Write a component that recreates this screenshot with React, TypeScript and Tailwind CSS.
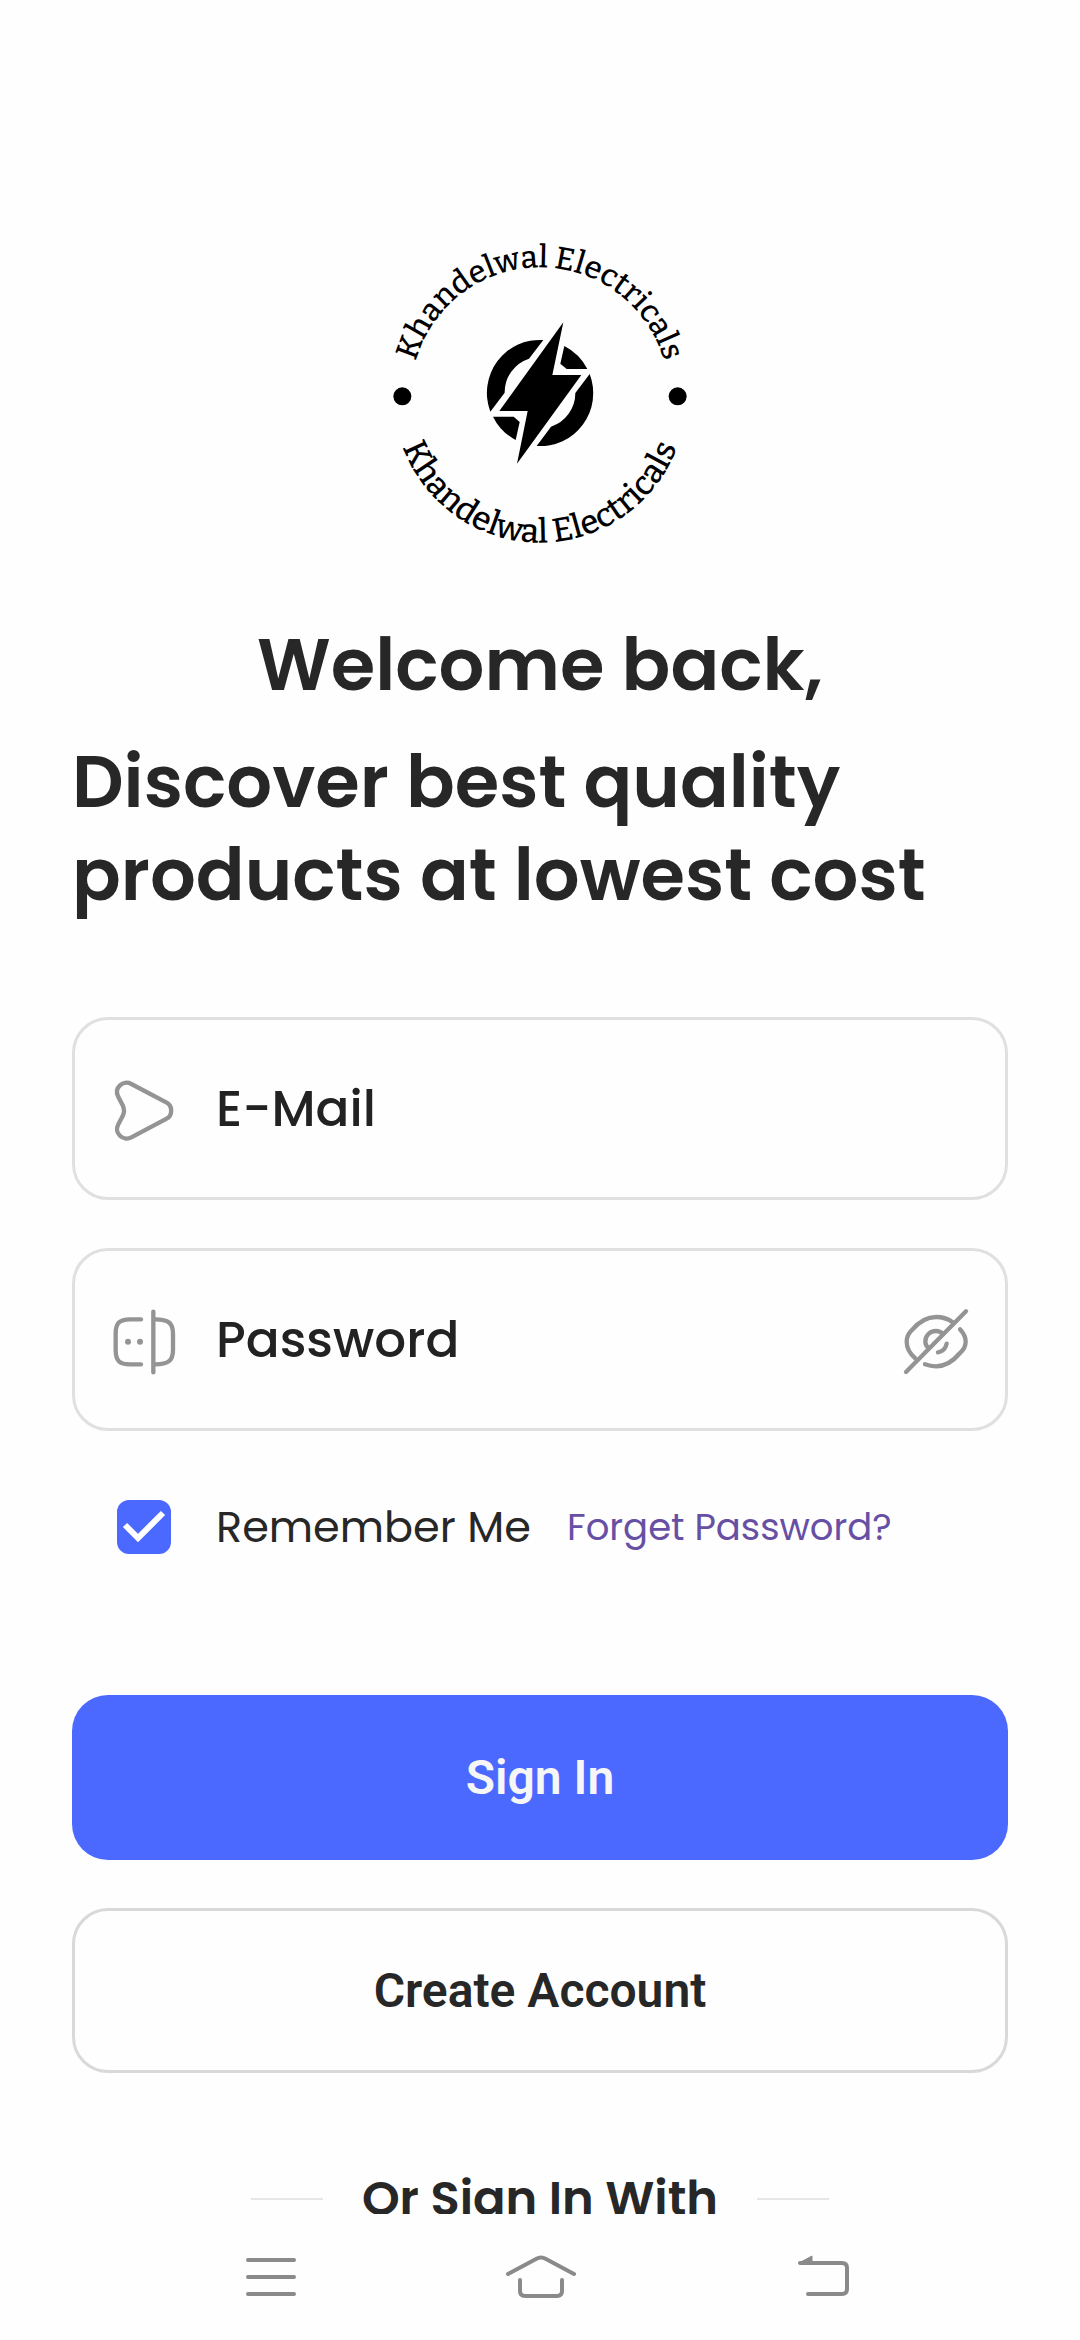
import { useState, type ReactNode } from "react";

const display = "font-['Poppins','Inter',sans-serif] text-[#272727]";

function Logo() {
  return (
    <svg
      viewBox="0 0 1020 1020"
      role="img"
      aria-label="Khandelwal Electricals"
      className="size-[340px] font-['Bitter','DejaVu_Serif_Condensed','DejaVu_Serif',serif] font-medium"
    >
      <defs>
        <path id="arc-top" d="M123 529 A387 387 0 0 1 897 529" />
        <path id="arc-bottom" d="M71 529 A439 439 0 0 0 949 529" />
      </defs>
      <text fontSize="94" textAnchor="middle">
        <textPath href="#arc-top" startOffset="50%">Khandelwal Electricals</textPath>
      </text>
      <text fontSize="100" textAnchor="middle">
        <textPath href="#arc-bottom" startOffset="50%">Khandelwal Electricals</textPath>
      </text>
      <circle cx="97" cy="529" r="27" />
      <circle cx="923" cy="529" r="27" />
      <path d="M580 307 L547 465 H634 L441 731 L473 573 H388 Z" />
      <path d="M520 360 A159 159 0 0 0 361 575 L404 518 A106 106 0 0 1 477 416 Z" />
      <path d="M583 378 A159 159 0 0 1 652 447 H590 L571 431 Z" />
      <path d="M659 462 A159 159 0 0 1 500 678 L543 620 A106 106 0 0 0 616 519 Z" />
      <path d="M369 590 A159 159 0 0 0 437 660 L449 606 L431 590 Z" />
    </svg>
  );
}

function LineIcon({ viewBox, children }: { viewBox: string; children: ReactNode }) {
  return (
    <svg
      viewBox={viewBox}
      aria-hidden="true"
      className="size-[72px] shrink-0 fill-none stroke-[#949494] stroke-[13] [stroke-linecap:round] [stroke-linejoin:round]"
    >
      {children}
    </svg>
  );
}

function Field({
  icon,
  label,
  type,
  action,
}: {
  icon: ReactNode;
  label: string;
  type: string;
  action?: ReactNode;
}) {
  return (
    <div className="flex h-[183px] items-center gap-9 rounded-[36px] border-3 border-[#e0e0e0] px-[33px]">
      {icon}
      <input
        type={type}
        aria-label={label}
        placeholder={label}
        className={`${display} h-full min-w-0 flex-1 bg-transparent text-[50px] font-medium outline-none placeholder:text-[#222222] placeholder:opacity-100`}
      />
      {action}
    </div>
  );
}

export default function App() {
  const [visible, setVisible] = useState(false);

  return (
    <div className="flex h-screen flex-col bg-[#fefefe]">
      <main className="min-h-0 flex-1 overflow-hidden px-18 pt-[220px]">
        <div className="flex justify-center">
          <Logo />
        </div>

        <h1 className={`${display} mt-[58px] text-center text-[72px] leading-[93px] font-semibold`}>
          Welcome back,
        </h1>
        <p className={`${display} mt-6 text-[72px] leading-[93px] font-semibold`}>
          Discover best quality products at lowest cost
        </p>

        <form className="mt-24 flex flex-col" onSubmit={(e) => e.preventDefault()}>
          <div className="flex flex-col gap-12">
            <Field
              label="E-Mail"
              type="email"
              icon={
                <LineIcon viewBox="144 218 216 216">
                  <path d="M214 251 L320 307 C338 317 338 345 320 355 L214 411 C190 424 160 398 175 372 L188 347 Q196 331 188 315 L175 290 C160 262 190 238 214 251 Z" />
                </LineIcon>
              }
            />
            <Field
              label="Password"
              type={visible ? "text" : "password"}
              icon={
                <LineIcon viewBox="144 911 216 216">
                  <path d="M243 957 H210 C178 957 167 968 167 1000 V1049 C167 1081 178 1092 210 1092 H243" />
                  <path d="M280 934 V1116" />
                  <path d="M286 957 C325 957 339 968 339 1000 V1049 C339 1081 325 1092 286 1092" />
                  <circle cx="204" cy="1024" r="9" className="fill-[#949494] stroke-none" />
                  <circle cx="240" cy="1024" r="9" className="fill-[#949494] stroke-none" />
                </LineIcon>
              }
              action={
                <button type="button" aria-label="Show password" onClick={() => setVisible(!visible)}>
                  <LineIcon viewBox="120 221 216 216">
                    <path d="M138 425 L318 243" />
                    <path d="M166 384 C150 370 140 352 140 334 C140 320 146 309 155 300 C175 276 200 260 228 260 C247 260 262 264 277 275" />
                    <path d="M300 297 C311 309 317 322 317 334 C317 346 311 358 300 368 C280 392 257 408 228 408 C216 408 206 406 195 402" />
                    <path d="M205 353 C198 346 196 340 196 334 C196 315 210 302 228 302 C236 302 243 305 249 311" />
                    <path d="M260 340 C257 354 248 364 234 366" />
                  </LineIcon>
                </button>
              }
            />
          </div>

          <div className="my-[60px] flex h-[72px] items-center gap-9 pl-[45px]">
            <label className={`${display} flex items-center gap-[45px] text-[43px] leading-[64px] whitespace-nowrap`}>
              <span className="grid size-[54px] place-items-center">
                <input
                  type="checkbox"
                  defaultChecked
                  className="peer col-start-1 row-start-1 size-full appearance-none rounded-xl border-3 border-[#4b68ff] checked:bg-[#4b68ff]"
                />
                <svg
                  viewBox="0 0 54 54"
                  aria-hidden="true"
                  className="pointer-events-none invisible col-start-1 row-start-1 size-full fill-none stroke-white stroke-6 peer-checked:visible"
                >
                  <path d="M8 25 L21 38 L46 13" />
                </svg>
              </span>
              Remember Me
            </label>
            <a
              href="#forgot"
              className="font-['Poppins','Inter',sans-serif] text-[37px] leading-[56px] whitespace-nowrap text-[#6750a4]"
            >
              Forget Password?
            </a>
          </div>

          <div className="mt-18 flex flex-col gap-12">
            <button
              type="submit"
              className="h-[165px] rounded-[36px] bg-[#4b68ff] font-['Roboto',sans-serif] text-[48px] leading-[72px] font-semibold text-[#f6f6f6]"
            >
              Sign In
            </button>
            <button
              type="button"
              className="h-[165px] rounded-[36px] border-3 border-[#d9d9d9] font-['Roboto',sans-serif] text-[48px] leading-[72px] font-semibold text-[#272727]"
            >
              Create Account
            </button>
          </div>
        </form>

        <div className="mt-[90px] flex items-center justify-center gap-[39px]">
          <span className="h-[2px] w-18 bg-[#e6e6e6]" />
          <h2 className={`${display} text-[48px] leading-[72px] font-semibold whitespace-nowrap`}>
            Or Sign In With
          </h2>
          <span className="h-[2px] w-18 bg-[#e6e6e6]" />
        </div>
      </main>

      <nav className="flex h-[126px] shrink-0 items-center justify-between px-[229px]">
        <button type="button" aria-label="Recent apps">
          <svg viewBox="0 0 72 72" className="size-18 fill-none stroke-[#8a8a8a] stroke-4 [stroke-linecap:round]">
            <path d="M19 19 H65 M19 36 H65 M19 53 H65" />
          </svg>
        </button>
        <button type="button" aria-label="Home">
          <svg viewBox="0 0 72 72" className="size-18 fill-none stroke-[#8a8a8a] stroke-4 [stroke-linecap:round]">
            <path d="M4 33 L32 18 Q37 15 42 18 L70 33" />
            <path d="M16 39 V50 Q16 55 21 55 H53 Q58 55 58 50 V39" />
          </svg>
        </button>
        <button type="button" aria-label="Back">
          <svg viewBox="0 0 72 72" className="size-18 fill-none stroke-[#8a8a8a] stroke-4 [stroke-linecap:round]">
            <path d="M21 22 H63 Q68 22 68 27 V48 Q68 53 63 53 H29" />
            <path d="M20 22 L33 15 V22 Z" className="fill-[#8a8a8a] stroke-1 [stroke-linejoin:round]" />
          </svg>
        </button>
      </nav>
    </div>
  );
}
